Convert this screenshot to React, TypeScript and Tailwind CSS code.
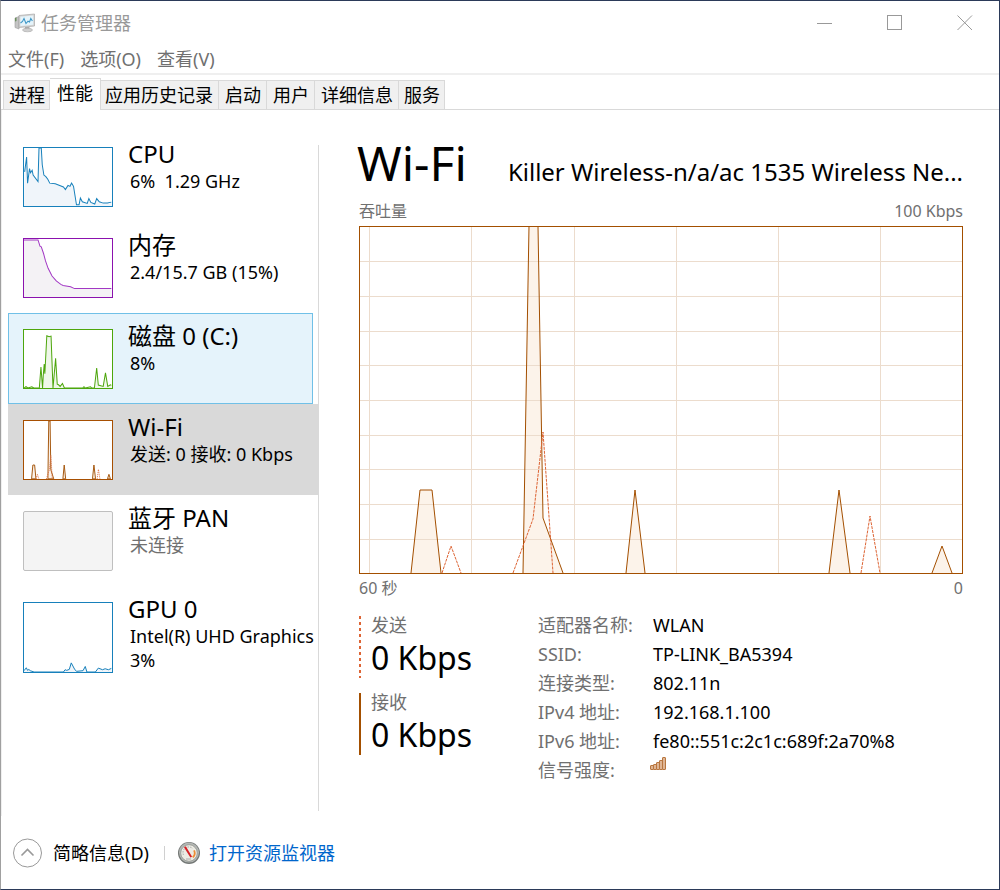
import { useState } from 'react';
import type { ReactNode } from 'react';

const TABS = [
  { label: '进程', pad: 'border-l pl-[5px] pr-1' },
  { label: '性能', pad: 'px-[7px]' },
  { label: '应用历史记录', pad: 'pl-1 pr-[5px]' },
  { label: '启动', pad: 'pl-1.5 pr-[5px]' },
  { label: '用户', pad: 'pl-1.5 pr-[5px]' },
  { label: '详细信息', pad: 'pl-1.5 pr-[5px]' },
  { label: '服务', pad: 'pl-[5px] pr-1' },
];

const MENUS = ['文件(F)', '选项(O)', '查看(V)'];

const CPU =
  '2,74 8,28 11,109 17,64 20,77 25,69 28,84 43,104 46,0 53,0 56,52 61,84 67,89 73,97 79,109 96,111 121,121 127,129 135,116 141,119 146,109 152,119 161,176 169,176 173,155 179,167 194,172 199,157 205,169 217,174 223,157 231,167 243,171 256,171 268,168';
const MEMORY =
  '0,3 43,3 49,22 53,24 60,45 66,68 74,91 86,115 99,130 113,141 120,144 143,148 155,154 268,154';
const DISK =
  '0,180 6,176 12,180 24,176 30,180 47,180 52,115 57,180 59,143 62,106 64,136 70,18 77,21 83,19 87,128 89,180 97,88 102,168 106,170 111,175 118,166 124,180 180,180 184,176 188,180 204,176 208,180 216,180 223,118 228,171 243,175 250,133 257,175 265,170 268,172';
const GPU =
  '0,208 7,199 11,207 15,204 19,208 31,212 121,212 126,205 131,207 139,204 145,184 155,203 161,210 181,208 188,195 193,212 219,212 228,200 241,205 249,202 259,205 268,201';

const RECEIVED = [
  '52,347 61,264 73,264 82,347',
  '164,347 170,0 179,0 184,292 204,347',
  '267,347 276,264 286,347',
  '470,347 480,264 491,347',
  '573,347 583,320 593,347',
];
const SENT = ['83,347 92,320 102,347', '154,347 174,293 184,206 194,347', '502,347 511,290 521,347'];

function Spark({ points, color, fill, height }: { points: string; color: string; fill: string; height: number }) {
  return (
    <svg className="block h-full w-full" viewBox={`0 0 270 ${height}`} preserveAspectRatio="none" aria-hidden="true">
      <polygon points={`0,${height} ${points} 270,${height}`} fill={fill} />
      <polyline points={points} fill="none" stroke={color} strokeWidth="1" vectorEffect="non-scaling-stroke" />
    </svg>
  );
}

function NetworkSpark() {
  return (
    <svg className="block h-full w-full" viewBox="0 0 604 348" preserveAspectRatio="none" aria-hidden="true">
      {RECEIVED.map((p) => (
        <polygon key={p} points={p} fill="#fbf2ea" stroke="#a75a12" strokeWidth="1" vectorEffect="non-scaling-stroke" />
      ))}
      {SENT.map((p) => (
        <polyline key={p} points={p} fill="none" stroke="#dd7044" strokeWidth="1" strokeDasharray="1 1" vectorEffect="non-scaling-stroke" />
      ))}
    </svg>
  );
}

function ThroughputChart() {
  return (
    <div className="h-[348px] border border-[#a34f00] bg-white">
      <svg className="block h-full w-full" viewBox="1 1 602 346" preserveAspectRatio="none" role="img" aria-label="吞吐量">
        {RECEIVED.map((p) => (
          <polygon key={p} points={p} fill="#fcf3ea" />
        ))}
        <g stroke="#ecdccd" strokeWidth="1">
          {[10, 112, 215, 317, 419, 521].map((x) => (
            <line key={x} x1={x + 0.5} x2={x + 0.5} y1="0" y2="348" vectorEffect="non-scaling-stroke" />
          ))}
          {[35, 70, 105, 139, 174, 209, 243, 278, 313].map((y) => (
            <line key={y} x1="0" x2="604" y1={y + 0.5} y2={y + 0.5} vectorEffect="non-scaling-stroke" />
          ))}
        </g>
        {RECEIVED.map((p) => (
          <polyline key={p} points={p} fill="none" stroke="#a34f00" strokeWidth="1" vectorEffect="non-scaling-stroke" />
        ))}
        {SENT.map((p) => (
          <polyline key={p} points={p} fill="none" stroke="#dd6434" strokeWidth="1" strokeDasharray="3 1" vectorEffect="non-scaling-stroke" />
        ))}
      </svg>
    </div>
  );
}

function ResourceItem({ title, detail, frame, box, children }: { title: string; detail: ReactNode; frame: string; box: string; children?: ReactNode }) {
  return (
    <button type="button" className={`flex min-h-[91px] items-start overflow-hidden pl-[15px] text-left ${box}`}>
      <span className={`mt-4 block w-[90px] shrink-0 border ${frame}`}>{children}</span>
      <span className="mt-2 ml-[15px] block whitespace-nowrap">
        <span className="block text-2xl leading-[30px]">{title}</span>
        <span className="ml-0.5 block text-lg leading-6">{detail}</span>
      </span>
    </button>
  );
}

function Meter({ label, bar }: { label: string; bar: string }) {
  return (
    <div className="flex h-[62px]">
      <span className={`w-0.5 ${bar}`} />
      <div className="pl-2.5">
        <div className="text-lg leading-[18px] text-[#707070]">{label}</div>
        <div className="text-[32px] leading-[48px]">0 Kbps</div>
      </div>
    </div>
  );
}

function AppIcon() {
  return (
    <svg width="22" height="20" viewBox="0 0 22 20" aria-hidden="true">
      <path d="M1 5l4-1.5v12.5l-4-1.5z" fill="#c4c4c4" stroke="#9c9c9c" strokeWidth=".6" />
      <path d="M1 5l1.5-.5v3.5L1 8.5z" fill="#6b8e5e" />
      <path d="M5 2.5l15.5-1.5v12L5 14.5z" fill="#d6d6d6" stroke="#a8a8a8" strokeWidth=".7" />
      <path d="M6.4 3.8l12.8-1.2v9.2L6.4 13z" fill="#e5f4fb" />
      <path d="M6.5 10l2-1.5 1.5-3 2 5 2-2.3 1.5.7 1.3-3.4 1.6 2.5" fill="none" stroke="#3d97c7" strokeWidth="1.1" />
      <path d="M11 14h4.5v2.5H11z" fill="#aaa" />
      <ellipse cx="13.5" cy="17" rx="5" ry="1.8" fill="#cfcfcf" stroke="#aaa" strokeWidth=".6" />
    </svg>
  );
}

function GaugeIcon() {
  return (
    <svg width="24" height="24" viewBox="0 0 24 24" aria-hidden="true">
      <circle cx="12" cy="12" r="11" fill="#737775" />
      <circle cx="12" cy="11.6" r="10" fill="#b4b7b4" />
      <circle cx="12" cy="12" r="8.3" fill="#ecebe3" stroke="#929590" strokeWidth=".8" />
      <path d="M6.5 14a5.7 5.7 0 0 1 9-6.6" fill="none" stroke="#aaa" strokeWidth="1" strokeDasharray="1.5 1" />
      <path d="M17 9.3a5.8 5.8 0 0 1-1.2 7" fill="none" stroke="#ef8c34" strokeWidth="1.8" />
      <path d="M7 6.2l1.8-.9 6.3 10.4-1.7.8z" fill="#d51f24" />
      <path d="M9 18h5" stroke="#aaa" />
    </svg>
  );
}

function SignalIcon() {
  return (
    <svg width="17" height="13" viewBox="0 0 17 13" role="img" aria-label="信号强度">
      <g fill="#dfb594" stroke="#b8763f" strokeWidth="1">
        <rect x=".5" y="8.5" width="3" height="4" rx=".5" />
        <rect x="3.5" y="7.5" width="3" height="5" rx=".5" />
        <rect x="6.5" y="5.5" width="3" height="7" rx=".5" />
        <rect x="9.5" y="3.5" width="3" height="9" rx=".5" />
        <rect x="12.5" y=".5" width="3" height="12" rx=".5" />
      </g>
    </svg>
  );
}

const DETAILS: [string, string][] = [
  ['适配器名称:', 'WLAN'],
  ['SSID:', 'TP-LINK_BA5394'],
  ['连接类型:', '802.11n'],
  ['IPv4 地址:', '192.168.1.100'],
  ['IPv6 地址:', 'fe80::551c:2c1c:689f:2a70%8'],
];

export default function App() {
  const [tab, setTab] = useState(1);
  return (
    <div
      lang="zh-CN"
      className="flex min-h-screen flex-col border border-[#2b3a59] border-l-[#a0a0a0] bg-white font-['Noto_Sans','Noto_Sans_CJK_SC',sans-serif] text-black"
    >
      <header className="flex h-[43px] items-center justify-between pl-[13px] text-[#999]">
        <div className="flex items-center gap-[5px]">
          <AppIcon />
          <h1 className="text-lg leading-6">任务管理器</h1>
        </div>
        <div className="-mr-px flex h-full items-center">
          <button type="button" aria-label="最小化" className="flex h-full w-[70px] items-center justify-center">
            <svg width="16" height="16" aria-hidden="true"><path d="M0 8.5h15" stroke="#999" /></svg>
          </button>
          <button type="button" aria-label="最大化" className="flex h-full w-[70px] items-center justify-center">
            <svg width="16" height="16" aria-hidden="true"><rect x=".5" y=".5" width="14" height="14" fill="none" stroke="#999" /></svg>
          </button>
          <button type="button" aria-label="关闭" className="flex h-full w-[70px] items-center justify-center">
            <svg width="16" height="16" aria-hidden="true"><path d="M.5.5l14.5 14.5M15 .5L.5 15" stroke="#999" /></svg>
          </button>
        </div>
      </header>

      <nav className="flex h-[31px] items-center gap-4 border-b-2 border-[#efefef] pl-[7px] text-lg leading-6 text-[#707070]">
        {MENUS.map((name) => (
          <button key={name} type="button">{name}</button>
        ))}
      </nav>

      <div role="tablist" className="flex h-[35px] items-end border-b border-[#d9d9d9] pl-0.5 text-lg leading-6">
        {TABS.map((t, i) => (
          <button
            key={t.label}
            type="button"
            role="tab"
            aria-selected={tab === i}
            onClick={() => setTab(i)}
            className={`border-t border-r border-[#d9d9d9] ${t.pad} ${tab === i ? '-mb-px h-8 bg-white pb-1' : 'h-[29px] bg-[#f0f0f0]'}`}
          >
            {t.label}
          </button>
        ))}
      </div>

      <main className="flex flex-1 border-l border-[#efefef]">
        <aside className="mt-[35px] mb-[5px] flex w-[317px] shrink-0 flex-col border-r border-[#d9d9d9] pl-1.5">
          <div className="-mt-3.5 flex flex-col">
            <ResourceItem title="CPU" detail={<>6%&nbsp; 1.29 GHz</>} box="mr-px" frame="h-[60px] border-[#1780bb] bg-white">
              <Spark points={CPU} color="#1780bb" fill="#f0f5fa" height={180} />
            </ResourceItem>
            <ResourceItem title="内存" detail="2.4/15.7 GB (15%)" box="mr-px" frame="h-[60px] border-[#8b12ae] bg-white">
              <Spark points={MEMORY} color="#a238c4" fill="#f4f2f5" height={180} />
            </ResourceItem>
            <ResourceItem title="磁盘 0 (C:)" detail="8%" box="mr-[5px] bg-[#e5f3fb] outline outline-1 -outline-offset-1 outline-[#70c0e7]" frame="h-[60px] border-[#4da60c] bg-white">
              <Spark points={DISK} color="#4da60c" fill="#eff7e9" height={180} />
            </ResourceItem>
            <ResourceItem title="Wi-Fi" detail="发送: 0 接收: 0 Kbps" box="bg-[#d9d9d9]" frame="h-[60px] border-[#a74f01] bg-white">
              <NetworkSpark />
            </ResourceItem>
            <ResourceItem title="蓝牙 PAN" detail={<span className="text-[#707070]">未连接</span>} box="mr-px" frame="h-[60px] rounded-xs border-[#bfbfbf] bg-[#f4f4f4]" />
            <ResourceItem title="GPU 0" detail={<>Intel(R) UHD Graphics<br />3%</>} box="" frame="h-[71px] border-[#1780bb] bg-white">
              <Spark points={GPU} color="#1780bb" fill="#f0f5fa" height={212} />
            </ResourceItem>
          </div>
        </aside>

        <section className="min-w-0 flex-1 pr-9 pl-10">
          <div className="flex items-baseline justify-between gap-6 pt-[18px]">
            <h2 className="-ml-0.5 shrink-0 text-5xl leading-[70px]">Wi-Fi</h2>
            <p className="truncate text-2xl leading-9">Killer Wireless-n/a/ac 1535 Wireless Ne...</p>
          </div>
          <div className="flex h-7 items-center justify-between pb-0.5 text-base text-[#707070]">
            <span>吞吐量</span>
            <span>100 Kbps</span>
          </div>
          <ThroughputChart />
          <div className="flex h-[30px] items-center justify-between pb-0.5 text-base text-[#707070]">
            <span>60 秒</span>
            <span>0</span>
          </div>

          <div className="mt-3 flex">
            <div className="flex w-[179px] shrink-0 flex-col gap-[15px]">
              <Meter label="发送" bar="bg-[repeating-linear-gradient(#dd6434_0_3px,transparent_3px_6px)]" />
              <Meter label="接收" bar="bg-[#a34f00]" />
            </div>
            <dl className="-mt-1.5 grid auto-rows-[29px] grid-cols-[115px_auto] items-center text-lg">
              {DETAILS.map(([k, v]) => (
                <div key={k} className="contents">
                  <dt className="text-[#707070]">{k}</dt>
                  <dd>{v}</dd>
                </div>
              ))}
              <dt className="text-[#707070]">信号强度:</dt>
              <dd className="-ml-[3px] pb-3"><SignalIcon /></dd>
            </dl>
          </div>
        </section>
      </main>

      <footer className="flex h-[73px] items-center pl-[11px] text-lg leading-6">
        <button type="button" className="flex items-center gap-[11px]">
          <svg width="30" height="30" viewBox="0 0 30 30" fill="none" aria-hidden="true">
            <circle cx="15.5" cy="15" r="14" stroke="#999" />
            <path d="M9.5 17.5l6-6 6 6" stroke="#999" strokeWidth="1.6" />
          </svg>
          <span>简略信息(D)</span>
        </button>
        <span className="mr-3 ml-[15px] h-3.5 w-px bg-[#d0d0d0]" />
        <a href="#resource-monitor" className="flex items-center gap-2 text-[#0066cc]">
          <GaugeIcon />
          打开资源监视器
        </a>
      </footer>
    </div>
  );
}
